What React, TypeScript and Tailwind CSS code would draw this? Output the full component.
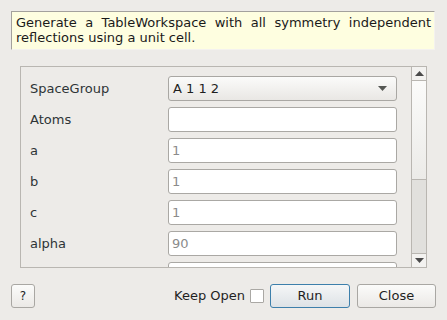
const rows: { label: string; value: string; kind: "combo" | "input" }[] = [
  { label: "SpaceGroup", value: "A 1 1 2", kind: "combo" },
  { label: "Atoms", value: "", kind: "input" },
  { label: "a", value: "1", kind: "input" },
  { label: "b", value: "1", kind: "input" },
  { label: "c", value: "1", kind: "input" },
  { label: "alpha", value: "90", kind: "input" },
  // only the top edge of this row shows in the scroll area
  { label: "", value: "", kind: "input" },
];

const Row = ({ label, value, kind }: { label: string; value: string; kind: string }) => {
  return (
    <div className="flex items-center h-[25px] shrink-0">
      <span className="w-[138px] text-[#2e3436]">{label}</span>
      {kind === "combo" ? (
        <div className="w-[229px] h-[25px] flex items-center justify-between pl-[4px] pr-[9px] border border-[#a9a7a3] rounded-[3px] bg-gradient-to-b from-[#fbfbfa] to-[#e9e7e4] text-[#1f1f1f]">
          <span>{value}</span>
          <svg width="9" height="5" viewBox="0 0 9 5">
            <path d="M0 0 L9 0 L4.5 5 Z" fill="#555753" />
          </svg>
        </div>
      ) : (
        <div className="w-[229px] h-[25px] flex items-center pl-[3px] border border-[#aaa8a4] rounded-[3px] bg-white text-[#8b8b8b]">
          {value}
        </div>
      )}
    </div>
  );
};

const App = () => {
  return (
    <div
      className="w-[447px] h-[320px] bg-[#edebe8] flex flex-col pt-[11px] text-[13px] text-[#2e3436] overflow-hidden"
      style={{ fontFamily: '"DejaVu Sans", sans-serif' }}
    >
      <div className="mx-[11px] w-[424px] h-[39px] shrink-0 bg-[#fefee0] border-t border-l border-[#a3a19d] border-r border-r-[#f4f2ef] border-b border-b-[#f4f2ef] pl-[4px] pr-[3px] pt-[4px] leading-[14.5px] text-[#1a1a1a] text-justify [text-align-last:left]">
        Generate a TableWorkspace with all symmetry independent reflections using a unit cell.
      </div>

      <div className="ml-[20px] mt-[16px] w-[407px] h-[202px] shrink-0 border border-[#b9b6b1] flex">
        <div className="flex-1 overflow-hidden flex flex-col gap-[6px] pt-[9px] pl-[9px]">
          {rows.map((r, i) => (
            <Row key={i} label={r.label} value={r.value} kind={r.kind} />
          ))}
        </div>
        <div className="w-[15px] border-l border-[#b9b6b1] flex flex-col bg-[#e1e0dd]">
          <div className="h-[14px] border-b border-[#b9b6b1] bg-[#f3f2f0] flex items-center justify-center">
            <svg width="9" height="5" viewBox="0 0 9 5">
              <path d="M0 5 L9 5 L4.5 0 Z" fill="#4a4a4a" />
            </svg>
          </div>
          <div className="h-[99px] border-b border-[#b9b6b1] bg-gradient-to-b from-[#fbfbfa] to-[#ecebe8]" />
          <div className="flex-1" />
          <div className="h-[14px] border-t border-[#b9b6b1] bg-[#f3f2f0] flex items-center justify-center">
            <svg width="9" height="5" viewBox="0 0 9 5">
              <path d="M0 0 L9 0 L4.5 5 Z" fill="#4a4a4a" />
            </svg>
          </div>
        </div>
      </div>

      <div className="flex items-center mt-[16px] px-[11px] h-[24px]">
        <button className="w-[24px] h-[24px] border border-[#a9a7a3] rounded-[3px] bg-gradient-to-b from-[#fbfbfa] to-[#ebe9e6] text-[12px] text-[#1f1f1f] flex items-center justify-center">
          ?
        </button>
        <div className="ml-auto flex items-center">
          <span className="text-[#1f1f1f]">Keep Open</span>
          <div className="ml-[5px] w-[14px] h-[14px] border border-[#aaa8a4] bg-white rounded-[1px]" />
          <button className="ml-[6px] w-[80px] h-[24px] border border-[#3d7fab] rounded-[3px] bg-gradient-to-b from-[#f5f6f7] to-[#dde2e6] text-[#1f1f1f] flex items-center justify-center">
            Run
          </button>
          <button className="ml-[7px] w-[79px] h-[24px] border border-[#a9a7a3] rounded-[3px] bg-gradient-to-b from-[#fbfbfa] to-[#ebe9e6] text-[#1f1f1f] flex items-center justify-center">
            Close
          </button>
        </div>
      </div>
    </div>
  );
};

export default App;
